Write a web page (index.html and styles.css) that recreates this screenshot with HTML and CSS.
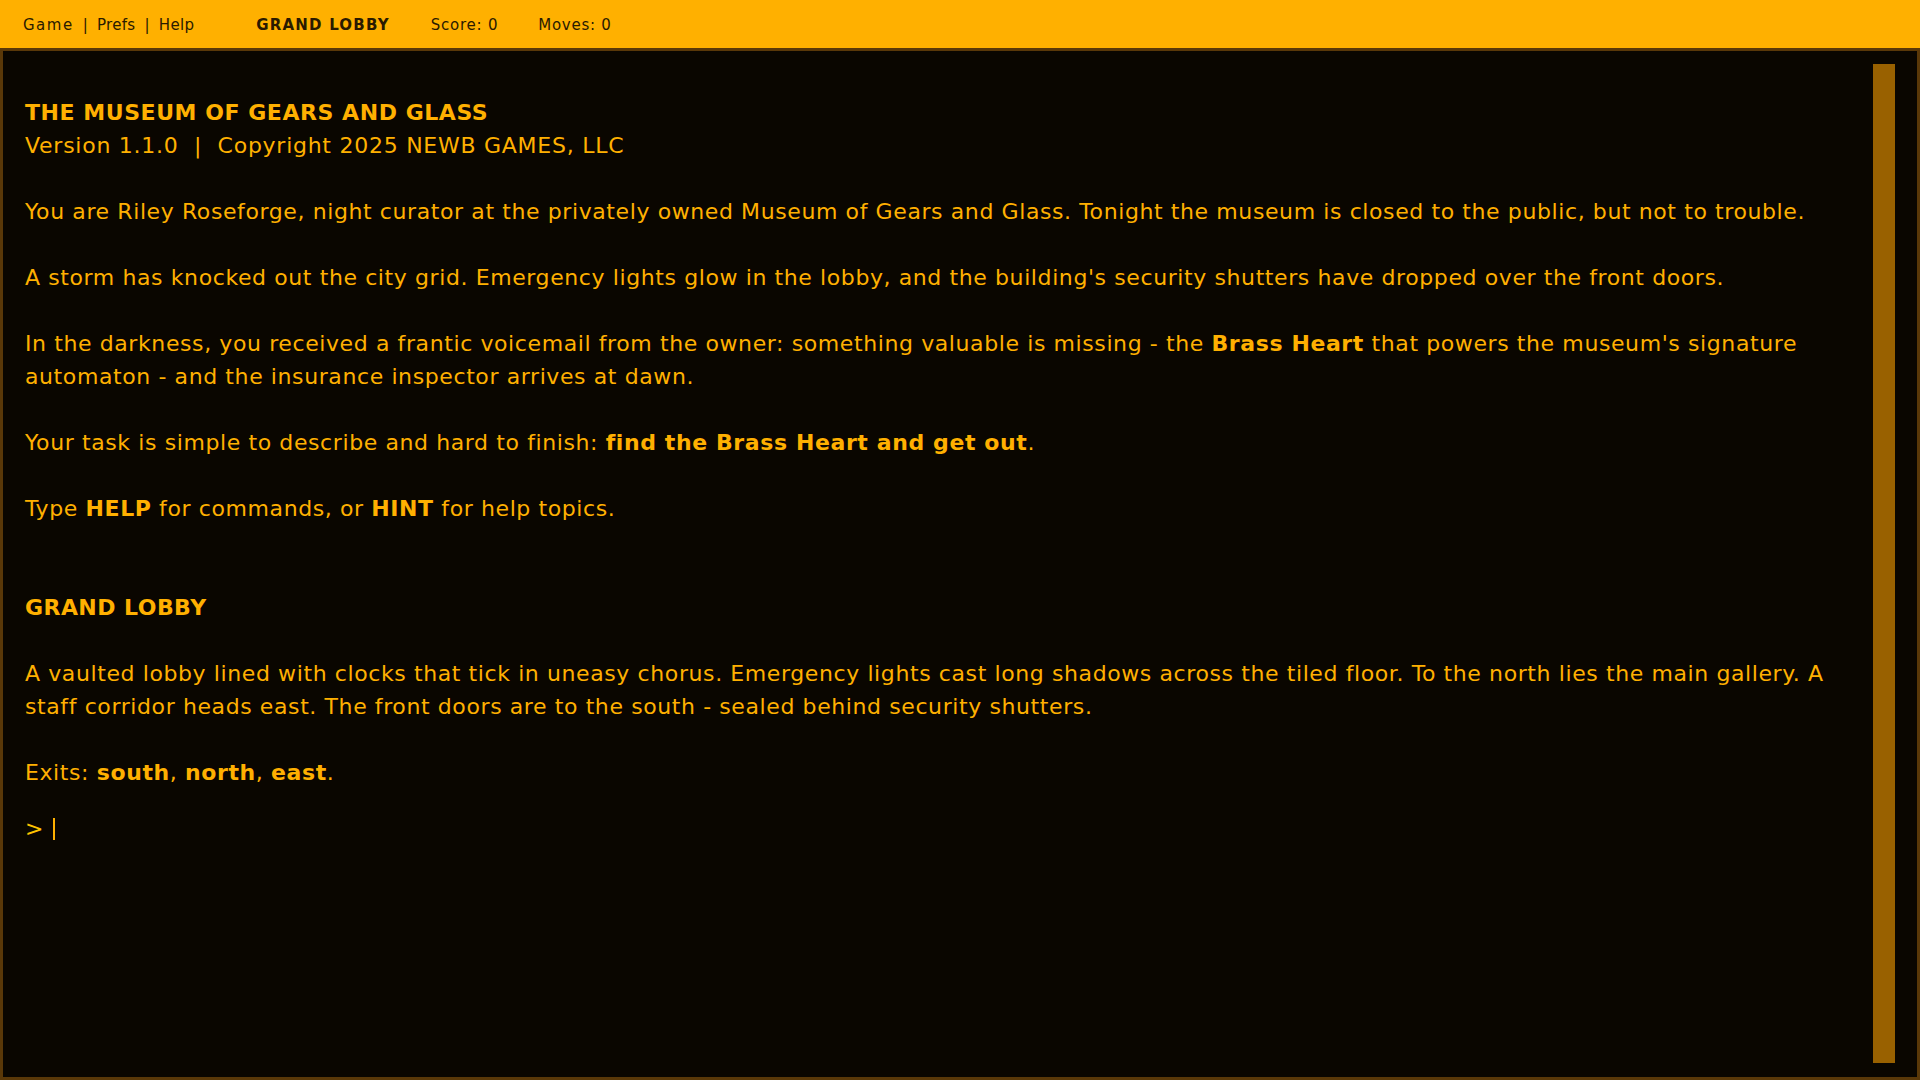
FILE: index.html
```html
<!DOCTYPE html>
<html lang="en">

<head>
    <meta charset="UTF-8">
    <meta name="viewport" content="width=device-width, initial-scale=1.0">
    <title>The Museum of Gears and Glass</title>
    <link rel="stylesheet" href="styles.css">
</head>

<body>

    <header class="menubar">
        <nav class="menu">
            <span class="menu-item game">Game</span>
            <span class="menu-sep">|</span>
            <span class="menu-item">Prefs</span>
            <span class="menu-sep">|</span>
            <span class="menu-item">Help</span>
        </nav>
        <span class="room-name">GRAND LOBBY</span>
        <span class="stat">Score: 0</span>
        <span class="stat">Moves: 0</span>
    </header>

    <main class="screen">
        <div class="output">
            <p><b class="title">THE MUSEUM OF GEARS AND GLASS</b><br><span class="version">Version 1.1.0 &nbsp;|&nbsp; Copyright 2025 NEWB GAMES, LLC</span></p>

            <p>You are Riley Roseforge, night curator at the privately owned Museum of Gears and Glass. Tonight the museum is closed to the public, but not to trouble.</p>

            <p>A storm has knocked out the city grid. Emergency lights glow in the lobby, and the building's security shutters have dropped over the front doors.</p>

            <p>In the darkness, you received a frantic voicemail from the owner: something valuable is missing - the <b>Brass Heart</b> that powers the museum's signature automaton - and the insurance inspector arrives at dawn.</p>

            <p>Your task is simple to describe and hard to finish: <b>find the Brass Heart and get out</b>.</p>

            <p>Type <b>HELP</b> for commands, or <b>HINT</b> for help topics.</p>

            <p class="room-title"><b>GRAND LOBBY</b></p>

            <p>A vaulted lobby lined with clocks that tick in uneasy chorus. Emergency lights cast long shadows across the tiled floor. To the north lies the main gallery. A staff corridor heads east. The front doors are to the south - sealed behind security shutters.</p>

            <p>Exits: <b>south</b>, <b>north</b>, <b>east</b>.</p>

            <div class="prompt">
                <span class="caret-sign">&gt;</span>
                <span class="cursor"></span>
            </div>
        </div>

        <div class="scrollbar">
            <div class="thumb"></div>
        </div>
    </main>

</body>

</html>
```

FILE: styles.css
```css
html,
body {
    margin: 0;
    height: 100%;
}

body {
    font-family: "DejaVu Sans", sans-serif;
    background-color: #0a0600;
    color: #ffb000;
    display: flex;
    flex-direction: column;
    overflow: hidden;
}

.menubar {
    height: 48px;
    flex-shrink: 0;
    background-color: #ffb000;
    color: #2a1a00;
    display: flex;
    align-items: center;
    padding: 1px 0 0 23px;
    box-sizing: border-box;
    font-size: 15px;
    letter-spacing: 0.75px;
}

.menu {
    display: flex;
    align-items: center;
    gap: 9px;
    margin-right: 62px;
    letter-spacing: 0.3px;
}

.menu-item.game {
    letter-spacing: 1.5px;
}

.room-name {
    font-weight: bold;
    letter-spacing: 1.2px;
    margin-right: 41px;
}

.stat {
    margin-right: 40px;
}

.screen {
    flex: 1;
    display: flex;
    border: 3px solid #5a3808;
    min-height: 0;
}

.output {
    flex: 1;
    padding: 45px 30px 0 22px;
    font-size: 22px;
    line-height: 33px;
    letter-spacing: 0.6px;
}

.output p {
    margin: 0 0 33px 0;
}

.title {
    letter-spacing: 0.55px;
}

.version {
    letter-spacing: 0.74px;
}

.room-title {
    margin-top: 66px !important;
    letter-spacing: 0.45px;
}

.prompt {
    display: flex;
    align-items: center;
    gap: 9px;
    color: #ffc400;
    margin-top: -10px;
}

.cursor {
    width: 2px;
    height: 22px;
    background-color: #ffb000;
}

.scrollbar {
    width: 22px;
    padding: 13px 22px 14px 0;
    flex-shrink: 0;
}

.thumb {
    height: 100%;
    background-color: #996100;
}
```
